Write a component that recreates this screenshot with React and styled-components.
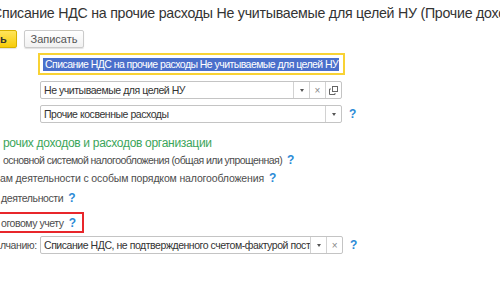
import { createGlobalStyle, styled } from "styled-components";

const GlobalStyle = createGlobalStyle`
  html, body {
    margin: 0;
    padding: 0;
    background: #fff;
    overflow: hidden;
  }
  body {
    font-family: "Liberation Sans", Arial, sans-serif;
    color: #4d4d4d;
  }
`;

const Page = styled.div`
  width: 500px;
  height: 300px;
  overflow: hidden;
  display: flex;
  flex-direction: column;
`;

const Title = styled.h1`
  margin: 4px 0 0 0;
  font-size: 14.2px;
  font-weight: normal;
  letter-spacing: -0.25px;
  line-height: 19px;
  color: #333;
  white-space: nowrap;
  text-indent: -8px;
`;

const Toolbar = styled.div`
  display: flex;
  gap: 7px;
  margin-top: 7px;
  height: 18px;
`;

const Button = styled.button`
  box-sizing: border-box;
  height: 18px;
  padding: ${({ $primary }) => ($primary ? "0 0 0 1px" : "0")};
  margin-left: ${({ $primary }) => ($primary ? "-2px" : "0")};
  width: ${({ $primary }) => ($primary ? "19px" : "60px")};
  border-radius: 2px;
  border: 1px solid ${({ $primary }) => ($primary ? "#d7b200" : "#cbcbcb")};
  background: ${({ $primary }) =>
    $primary
      ? "linear-gradient(#ffe55c, #f7cc0a)"
      : "linear-gradient(#ffffff, #f1f1f1)"};
  font-family: inherit;
  font-size: 11px;
  font-weight: ${({ $primary }) => ($primary ? "bold" : "normal")};
  color: ${({ $primary }) => ($primary ? "#333" : "#555")};
  text-align: ${({ $primary }) => ($primary ? "left" : "center")};
  box-shadow: 0 1px 1px rgba(0, 0, 0, 0.12);
`;

const Form = styled.div`
  display: flex;
  flex-direction: column;
  padding-left: 38px;
  margin-top: 5px;
  gap: 6px;
`;

const FocusFrame = styled.div`
  box-sizing: border-box;
  width: 307px;
  height: 22px;
  border: 2px solid #f8d234;
  padding: 2px 4px 2px 3px;
  display: flex;
  align-items: center;
`;

const Selected = styled.span`
  background: #4a6fcb;
  color: #fff;
  font-size: 10.5px;
  letter-spacing: -0.55px;
  line-height: 13px;
  white-space: nowrap;
  overflow: hidden;
  padding-left: 2px;
  flex: 1;
`;

const Row = styled.div`
  display: flex;
  align-items: center;
  gap: 7px;
  margin-left: ${({ $offset }) => $offset ?? 2}px;
`;

const Field = styled.div`
  box-sizing: border-box;
  width: ${({ $width }) => $width || 302}px;
  height: 18px;
  border: 1px solid #c4c4c4;
  border-radius: 2px;
  display: flex;
  background: #fff;
`;

const FieldText = styled.div`
  flex: 1;
  font-size: 10.5px;
  letter-spacing: -0.45px;
  line-height: 16px;
  padding-left: 3px;
  color: #333;
  white-space: nowrap;
  overflow: hidden;
`;

const FieldButton = styled.div`
  width: 15px;
  flex-shrink: 0;
  border-left: 1px solid #d2d2d2;
  display: flex;
  align-items: center;
  justify-content: center;
  color: #888;
  font-size: 10px;
`;

const Arrow = styled.span`
  width: 0;
  height: 0;
  border-left: 2.5px solid transparent;
  border-right: 2.5px solid transparent;
  border-top: 3px solid #555;
`;

const Help = styled.span`
  color: #2c8ad6;
  font-size: 12px;
  font-weight: bold;
  letter-spacing: 0;
`;

const Section = styled.div`
  display: flex;
  flex-direction: column;
  margin-top: 12px;
`;

const GroupTitle = styled.div`
  font-size: 12px;
  letter-spacing: -0.3px;
  color: #3ba55a;
  line-height: 16px;
  white-space: nowrap;
  padding-left: 3px;
`;

const Line = styled.div`
  font-size: 10.5px;
  letter-spacing: ${({ $spacing }) => $spacing ?? -0.4}px;
  line-height: 14px;
  height: 14px;
  color: #4d4d4d;
  white-space: nowrap;
  padding-left: ${({ $pad }) => $pad ?? 3}px;
  margin-top: ${({ $mt }) => $mt ?? 5}px;
  display: flex;
  gap: 5px;
  align-items: center;
`;

const Marked = styled.div`
  box-sizing: border-box;
  width: 86px;
  height: 21px;
  margin-left: -2px;
  margin-top: 7px;
  border: 2px solid #e8262b;
  display: flex;
  align-items: center;
  gap: 5px;
  padding-left: 1px;
  font-size: 10.5px;
  letter-spacing: -0.45px;
  color: #4d4d4d;
  white-space: nowrap;
`;

const LastRow = styled.div`
  display: flex;
  align-items: center;
  margin-top: 3px;
  font-size: 10.5px;
  letter-spacing: -0.4px;
  white-space: nowrap;
`;

const Label = styled.span`
  display: inline-block;
  flex-shrink: 0;
  width: 40px;
  color: #4d4d4d;
`;

const CopyIcon = () => (
  <svg width="9" height="9" viewBox="0 0 9 9">
    <rect x="3.5" y="0.5" width="5" height="5" fill="none" stroke="#666" />
    <path d="M2 3 H0.5 V8.5 H6 V7" fill="none" stroke="#666" />
  </svg>
);

export default function App() {
  return (
    <>
      <GlobalStyle />
      <Page>
        <Title>
          Списание НДС на прочие расходы Не учитываемые для целей НУ (Прочие доходы и расходы)
        </Title>
        <Toolbar>
          <Button $primary>ь</Button>
          <Button>Записать</Button>
        </Toolbar>
        <Form>
          <FocusFrame>
            <Selected>Списание НДС на прочие расходы Не учитываемые для целей НУ</Selected>
          </FocusFrame>
          <Row>
            <Field>
              <FieldText>Не учитываемые для целей НУ</FieldText>
              <FieldButton>
                <Arrow />
              </FieldButton>
              <FieldButton>×</FieldButton>
              <FieldButton>
                <CopyIcon />
              </FieldButton>
            </Field>
          </Row>
          <Row>
            <Field>
              <FieldText>Прочие косвенные расходы</FieldText>
              <FieldButton>
                <Arrow />
              </FieldButton>
            </Field>
            <Help>?</Help>
          </Row>
        </Form>
        <Section>
          <GroupTitle>рочих доходов и расходов организации</GroupTitle>
          <Line $mt={2} $spacing={-0.55}>
            основной системой налогообложения (общая или упрощенная) <Help>?</Help>
          </Line>
          <Line $mt={4} $pad={0} $spacing={-0.15}>
            ам деятельности с особым порядком налогообложения <Help>?</Help>
          </Line>
          <Line $mt={6} $pad={1}>
            деятельности <Help>?</Help>
          </Line>
          <Marked>
            оговому учету <Help>?</Help>
          </Marked>
          <LastRow>
            <Label>лчанию:</Label>
            <Row $offset={0}>
              <Field $width={303}>
                <FieldText>Списание НДС, не подтвержденного счетом-фактурой поставщика</FieldText>
                <FieldButton>
                  <Arrow />
                </FieldButton>
                <FieldButton>×</FieldButton>
              </Field>
              <Help>?</Help>
            </Row>
          </LastRow>
        </Section>
      </Page>
    </>
  );
}
